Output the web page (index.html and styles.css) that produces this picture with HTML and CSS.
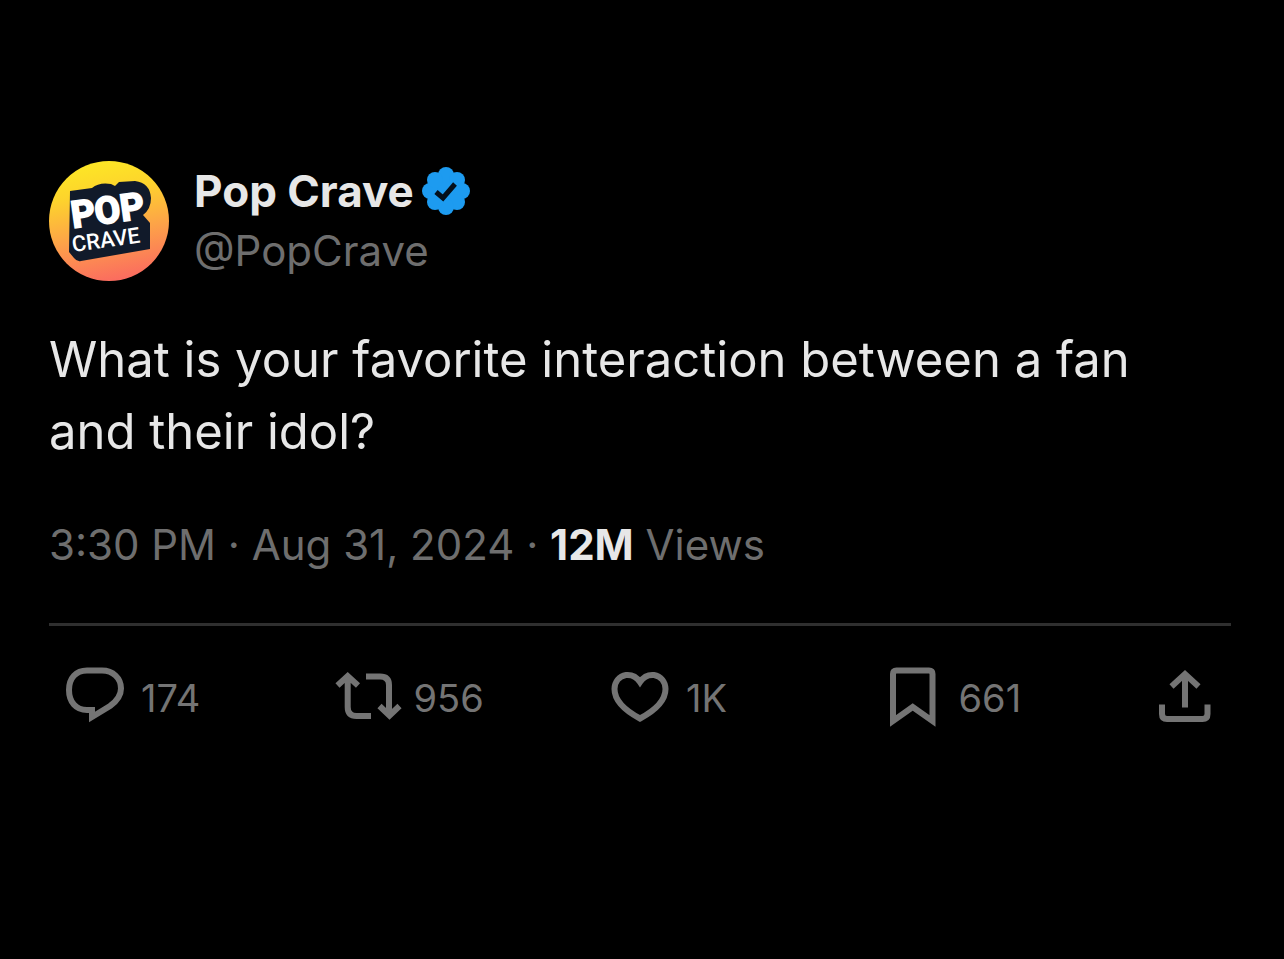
FILE: index.html
```html
<!DOCTYPE html>
<html lang="en">
<head>
    <meta charset="UTF-8">
    <meta name="viewport" content="width=device-width, initial-scale=1.0">
    <title>Pop Crave on X</title>
    <link rel="stylesheet" href="styles.css">
</head>
<body>

<article class="post">
    <header class="author">
        <svg class="avatar" viewBox="0 0 120 120" role="img" aria-label="Pop Crave">
            <defs>
                <linearGradient id="sunset" x1="0.4" y1="0" x2="0.6" y2="1">
                    <stop offset="0" stop-color="#fde725"/>
                    <stop offset="0.25" stop-color="#fdd42c"/>
                    <stop offset="0.6" stop-color="#fda348"/>
                    <stop offset="1" stop-color="#fb6a60"/>
                </linearGradient>
            </defs>
            <circle cx="60" cy="60" r="60" fill="url(#sunset)"/>
            <path d="M21 30L43 27Q50 21 62 23L66 25L70 21L86 20Q101 22 102 37Q102 48 94 54L101 62V88L32 100Q28 101 25 97L20 91Z" fill="#111a2a"/>
            <text class="logo-pop" transform="translate(24 67) rotate(-8)">POP</text>
            <text class="logo-crave" transform="translate(24 91) rotate(-8)">CRAVE</text>
        </svg>
        <div class="names">
            <div class="name">
                <a href="#">Pop Crave</a>
                <svg class="badge" viewBox="0 0 48 48" role="img" aria-label="Verified">
                    <g fill="#1d9bf0">
                        <circle cx="24" cy="24" r="19"/>
                        <circle cx="24" cy="8" r="8"/>
                        <circle cx="35" cy="13" r="8"/>
                        <circle cx="40" cy="24" r="8"/>
                        <circle cx="35" cy="35" r="8"/>
                        <circle cx="24" cy="40" r="8"/>
                        <circle cx="13" cy="35" r="8"/>
                        <circle cx="8" cy="24" r="8"/>
                        <circle cx="13" cy="13" r="8"/>
                    </g>
                    <path d="M14 25L21 31L33 17" fill="none" stroke="#04101c" stroke-width="5"/>
                </svg>
            </div>
            <a class="handle" href="#">@PopCrave</a>
        </div>
    </header>

    <p class="text">What is your favorite interaction between a fan and their idol?</p>

    <p class="meta"><time datetime="2024-08-31T15:30">3:30 PM · Aug 31, 2024</time> · <strong>12M</strong> Views</p>

    <div class="actions">
        <button type="button" aria-label="Reply, 174">
            <svg class="icon" viewBox="0 0 64 64">
                <path d="M24 6.5H39C50 6.5 58 14 58 24.5C58 32 54 37 47 42L29 53V46H24C13 46 6 38 6 26S13 6.5 24 6.5Z"/>
            </svg>
            <span>174</span>
        </button>
        <button type="button" aria-label="Repost, 956">
            <svg class="icon" viewBox="0 0 64 64">
                <path d="M1.500 21.500L11.700 12L22 21.500M11.700 12V43Q11.700 52 20.500 52H35"/>
                <path d="M30 12.500H44Q53 12.500 53 21V51M43.500 42L53.500 51.500L63.500 42"/>
            </svg>
            <span>956</span>
        </button>
        <button type="button" aria-label="Like, 1K">
            <svg class="icon" viewBox="0 0 64 64">
                <path d="M32 18C28 12 23 10.500 18 11C11 12 6.500 18 6.500 25C6.500 38 18 47 32 54.500C46 47 57.500 38 57.500 25C57.500 18 53 12 46 11C41 10.500 36 12 32 18Z"/>
            </svg>
            <span>1K</span>
        </button>
        <button type="button" aria-label="Bookmark, 661">
            <svg class="icon" viewBox="0 0 64 64">
                <path d="M12 10Q12 6.500 15.500 6.500H48Q51.500 6.500 51.500 10V57L31.700 43L12 57Z"/>
            </svg>
            <span>661</span>
        </button>
        <button type="button" aria-label="Share">
            <svg class="icon" viewBox="0 0 64 64">
                <path d="M18.500 22.500L32 10L45.500 22.500M32 10V43.500"/>
                <path d="M9 40.500V50Q9 55 14 55H49.500Q54.500 55 54.500 50V40.500"/>
            </svg>
        </button>
    </div>
</article>

</body>
</html>
```
FILE: styles.css
```css
body {
    font-family: Inter, "Liberation Sans", sans-serif;
    background-color: #000000;
    color: #e7e7e7;
    margin: 0;
}
a {
    color: inherit;
    text-decoration: none;
}
.post {
    padding: 161px 53px 40px 49px;
}
.author {
    display: flex;
    gap: 25px;
}
.avatar {
    width: 120px;
    height: 120px;
    flex: none;
}
.logo-pop {
    font-family: Roboto, sans-serif;
    font-size: 37px;
    font-weight: 700;
    fill: #ffffff;
    stroke: #ffffff;
    stroke-width: 2;
}
.logo-crave {
    font-family: Roboto, sans-serif;
    font-size: 22px;
    font-weight: 500;
    fill: #ffffff;
}
.names {
    font-size: 42px;
    line-height: 60px;
}
.name {
    display: flex;
    align-items: center;
    gap: 8px;
    font-size: 44px;
    font-weight: 700;
}
.badge {
    width: 48px;
    height: 48px;
}
.handle {
    color: #6e6e6e;
}
.text {
    margin: 43px 0 0;
    padding-right: 48px;
    font-size: 49px;
    line-height: 72px;
}
.meta {
    margin: 47px 0 0;
    color: #6e6e6e;
    font-size: 42px;
    line-height: 60px;
}
.meta strong {
    color: #e7e7e7;
}
.actions {
    display: grid;
    grid-template-columns: repeat(4, 1fr) 64px;
    margin-top: 48px;
    padding: 38px 14px 0;
    border-top: 3px solid #2f2f2f;
}
.actions button {
    display: flex;
    align-items: center;
    gap: 14px;
    padding: 0;
    border: none;
    background: none;
    color: #747474;
    font: inherit;
    font-size: 38px;
    cursor: pointer;
}
.actions span {
    padding-top: 4px;
}
.icon {
    width: 64px;
    height: 64px;
    overflow: visible;
    fill: none;
    stroke: #747474;
    stroke-width: 6;
}
```
